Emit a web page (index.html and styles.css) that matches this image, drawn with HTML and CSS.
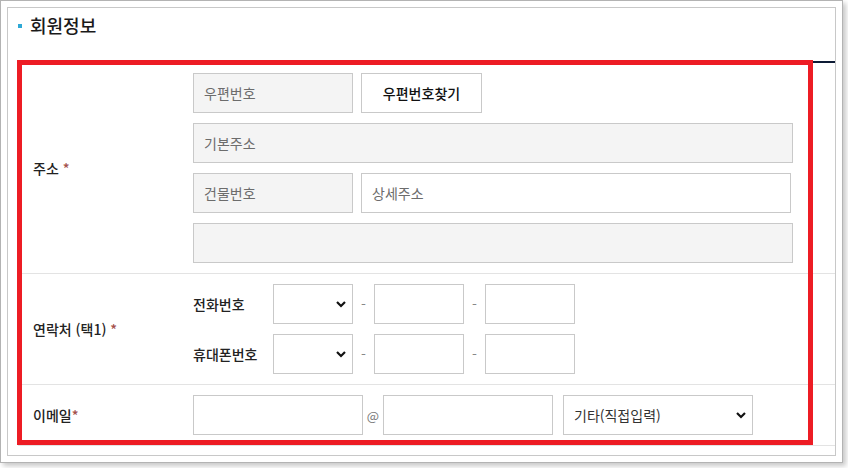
FILE: index.html
```html
<!DOCTYPE html>
<html lang="ko">
<head>
<meta charset="utf-8">
<title>회원정보</title>
<link rel="stylesheet" href="styles.css">
</head>
<body>
<div class="frame">
  <div class="panel">
    <h2 class="title"><span class="bullet"></span>회원정보</h2>
    <div class="form">
      <div class="row row-addr">
        <div class="label">주소 <span class="req">*</span></div>
        <div class="field">
          <div class="line">
            <input class="box ro w160" type="text" placeholder="우편번호" readonly>
            <button class="btn" type="button">우편번호찾기</button>
          </div>
          <div class="line">
            <input class="box ro w600" type="text" placeholder="기본주소" readonly>
          </div>
          <div class="line">
            <input class="box ro w160" type="text" placeholder="건물번호" readonly>
            <input class="box w430" type="text" placeholder="상세주소">
          </div>
          <div class="line">
            <input class="box ro w600" type="text" readonly>
          </div>
        </div>
      </div>
      <div class="row row-phone">
        <div class="label">연락처 (택1) <span class="req">*</span></div>
        <div class="field">
          <div class="line">
            <span class="sublabel">전화번호</span>
            <span class="sel w80">
              <select class="box"><option></option></select>
              <svg class="chev" width="10" height="7" viewBox="0 0 10 7"><polyline points="1,1 5,5 9,1" fill="none" stroke="#111" stroke-width="2.2"/></svg>
            </span>
            <span class="sep">-</span>
            <input class="box w90" type="text">
            <span class="sep">-</span>
            <input class="box w90" type="text">
          </div>
          <div class="line">
            <span class="sublabel">휴대폰번호</span>
            <span class="sel w80">
              <select class="box"><option></option></select>
              <svg class="chev" width="10" height="7" viewBox="0 0 10 7"><polyline points="1,1 5,5 9,1" fill="none" stroke="#111" stroke-width="2.2"/></svg>
            </span>
            <span class="sep">-</span>
            <input class="box w90" type="text">
            <span class="sep">-</span>
            <input class="box w90" type="text">
          </div>
        </div>
      </div>
      <div class="row row-mail">
        <div class="label">이메일<span class="req">*</span></div>
        <div class="field">
          <div class="line">
            <input class="box w170" type="text">
            <span class="at">@</span>
            <input class="box w170" type="text">
            <span class="sel w190 ml10">
              <select class="box"><option>기타(직접입력)</option></select>
              <svg class="chev" width="10" height="7" viewBox="0 0 10 7"><polyline points="1,1 5,5 9,1" fill="none" stroke="#111" stroke-width="2.2"/></svg>
            </span>
          </div>
        </div>
      </div>
    </div>
  </div>
</div>
<div class="highlight"></div>
</body>
</html>
```

FILE: styles.css
```css
* { box-sizing: border-box; }
html, body { margin: 0; padding: 0; background: #fff; }
body {
  font-family: "Noto Sans CJK KR", "Noto Sans", sans-serif;
  font-size: 14px;
  color: #222;
  width: 848px;
  height: 468px;
  overflow: hidden;
}
.frame {
  width: 843px;
  height: 463px;
  border: 1px solid #b3b3b3;
  padding: 6px;
  background: #fff;
  box-shadow: 3px 3px 5px rgba(0, 0, 0, 0.22);
}
.panel {
  height: 100%;
  border: 1px solid #c8c8c8;
  padding-left: 10px;
}
.title {
  margin: 0 0 19px 0;
  height: 34px;
  line-height: 34px;
  font-size: 18px;
  font-weight: 500;
  color: #1a1a1a;
  display: flex;
  align-items: center;
}
.bullet {
  width: 4px;
  height: 4px;
  background: #2ea9d6;
  margin-right: 8px;
  margin-top: 1px;
}
.form {
  border-top: 2px solid #0d1b35;
}
.row {
  display: grid;
  grid-template-columns: 175px 1fr;
  border-bottom: 1px solid #e3e3e3;
  padding: 10px 0;
}
.label {
  padding-left: 15px;
  display: flex;
  align-items: center;
  font-weight: 500;
  color: #222;
  white-space: pre;
}
.req { color: #a4504a; }
.field {
  display: flex;
  flex-direction: column;
  gap: 10px;
}
.line {
  display: flex;
  align-items: center;
  height: 40px;
}
.box {
  height: 40px;
  border: 1px solid #c9c9c9;
  background: #fff;
  padding: 0 10px;
  font-family: inherit;
  font-size: 14px;
  color: #333;
  outline: none;
  border-radius: 0;
  margin: 0;
}
.box::placeholder { color: #6c6c6c; opacity: 1; }
.ro { background: #f4f4f4; }
.w160 { width: 160px; }
.w600 { width: 600px; }
.w430 { width: 430px; margin-left: 8px; }
.w90 { width: 90px; }
.w170 { width: 170px; }
.btn {
  width: 121px;
  height: 40px;
  margin-left: 8px;
  border: 1px solid #c9c9c9;
  background: #fff;
  font-family: inherit;
  font-size: 14px;
  font-weight: 500;
  color: #111;
  padding: 0;
}
.sublabel {
  width: 80px;
  font-weight: 500;
  color: #222;
}
.sel {
  position: relative;
  display: block;
  height: 40px;
}
.sel select {
  width: 100%;
  appearance: none;
  -webkit-appearance: none;
  color: #333;
}
.w80 { width: 80px; }
.w190 { width: 190px; }
.ml10 { margin-left: 10px; }
.chev {
  position: absolute;
  right: 7px;
  top: 17px;
}
.sep {
  width: 21px;
  text-align: center;
  color: #888;
}
.at {
  width: 20px;
  text-align: center;
  color: #777;
  font-size: 13px;
}
.highlight {
  position: absolute;
  left: 17px;
  top: 60px;
  width: 796px;
  height: 385px;
  border: 5px solid #ed1c24;
}
```
